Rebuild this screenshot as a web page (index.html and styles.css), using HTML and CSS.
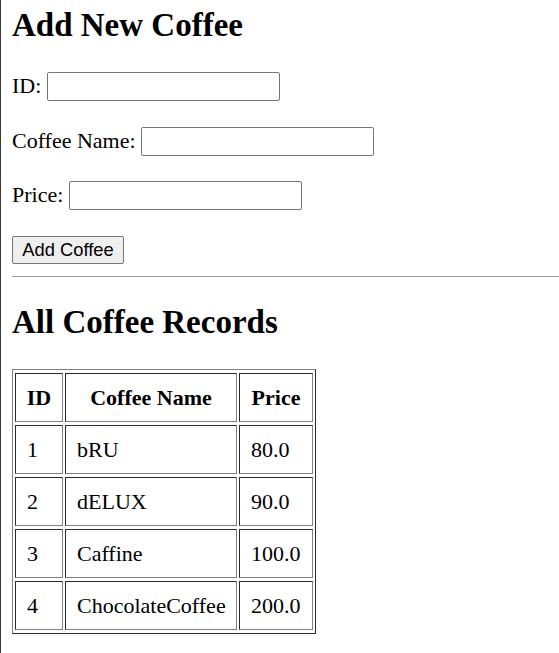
FILE: index.html
```html
<!DOCTYPE html>
<html lang="en">
<head>
<meta charset="utf-8">
<title>Coffee</title>
<link rel="stylesheet" href="styles.css">
</head>
<body>
<h2 class="title">Add New Coffee</h2>
<form class="coffee-form">
  <div class="row"><label for="cid">ID:</label> <input id="cid" type="text"></div>
  <div class="row"><label for="cname">Coffee Name:</label> <input id="cname" type="text"></div>
  <div class="row"><label for="cprice">Price:</label> <input id="cprice" type="text"></div>
  <div class="row row-last"><button type="submit" class="btn">Add Coffee</button></div>
</form>
<hr class="divider">
<h2 class="title records-title">All Coffee Records</h2>
<table class="records">
  <thead>
    <tr><th class="c-id">ID</th><th class="c-name">Coffee Name</th><th class="c-price">Price</th></tr>
  </thead>
  <tbody>
    <tr><td>1</td><td>bRU</td><td>80.0</td></tr>
    <tr><td>2</td><td>dELUX</td><td>90.0</td></tr>
    <tr><td>3</td><td>Caffine</td><td>100.0</td></tr>
    <tr><td>4</td><td>ChocolateCoffee</td><td>200.0</td></tr>
  </tbody>
</table>
</body>
</html>
```
FILE: styles.css
```css
html {
  height: 100%;
}

body {
  margin: 0;
  min-height: 100%;
  box-sizing: border-box;
  display: flow-root;
  border-left: 1px solid #3a3a3a;
  padding-left: 11px;
  font-family: "Liberation Serif", "Times New Roman", serif;
  font-size: 22px;
  color: #000;
  background: #fff;
}

.title {
  font-size: 33px;
  font-weight: bold;
  line-height: 38px;
  margin: 6px 0 28px;
}

.records-title {
  margin: 26px 0 28px;
}

.coffee-form {
  margin: 0;
}

.row {
  margin-bottom: 25.7px;
}

.row-last {
  margin-bottom: 0;
}

.row input {
  width: 233px;
  height: 29px;
  box-sizing: border-box;
  margin: 0;
  padding: 1px 3px;
  border: 1px solid #767676;
  border-radius: 2px;
  font-family: "Liberation Sans", Arial, sans-serif;
  font-size: 18.33px;
  background: #fff;
  vertical-align: baseline;
}

.btn {
  width: 112px;
  height: 28px;
  box-sizing: border-box;
  margin: 0;
  padding: 0;
  border: 1px solid #767676;
  border-radius: 2px;
  background: #efefef;
  color: #000;
  font-family: "Liberation Sans", Arial, sans-serif;
  font-size: 18.33px;
}

.divider {
  margin: 12px 0 0;
  height: 0;
  border: 0;
  border-top: 1px solid #9a9a9a;
}

.records {
  border: 1px outset grey;
  border-spacing: 2px 3px;
  table-layout: fixed;
  width: 304px;
}

.records th,
.records td {
  box-sizing: border-box;
  border: 1px inset grey;
  padding: 11px 10px 11px 11px;
  line-height: 25px;
  vertical-align: middle;
}

.records th {
  font-weight: bold;
  text-align: center;
  padding-left: 10px;
}

.records td {
  text-align: left;
}

.c-id {
  width: 48px;
}

.c-name {
  width: 172px;
}

.c-price {
  width: 74px;
}
```
